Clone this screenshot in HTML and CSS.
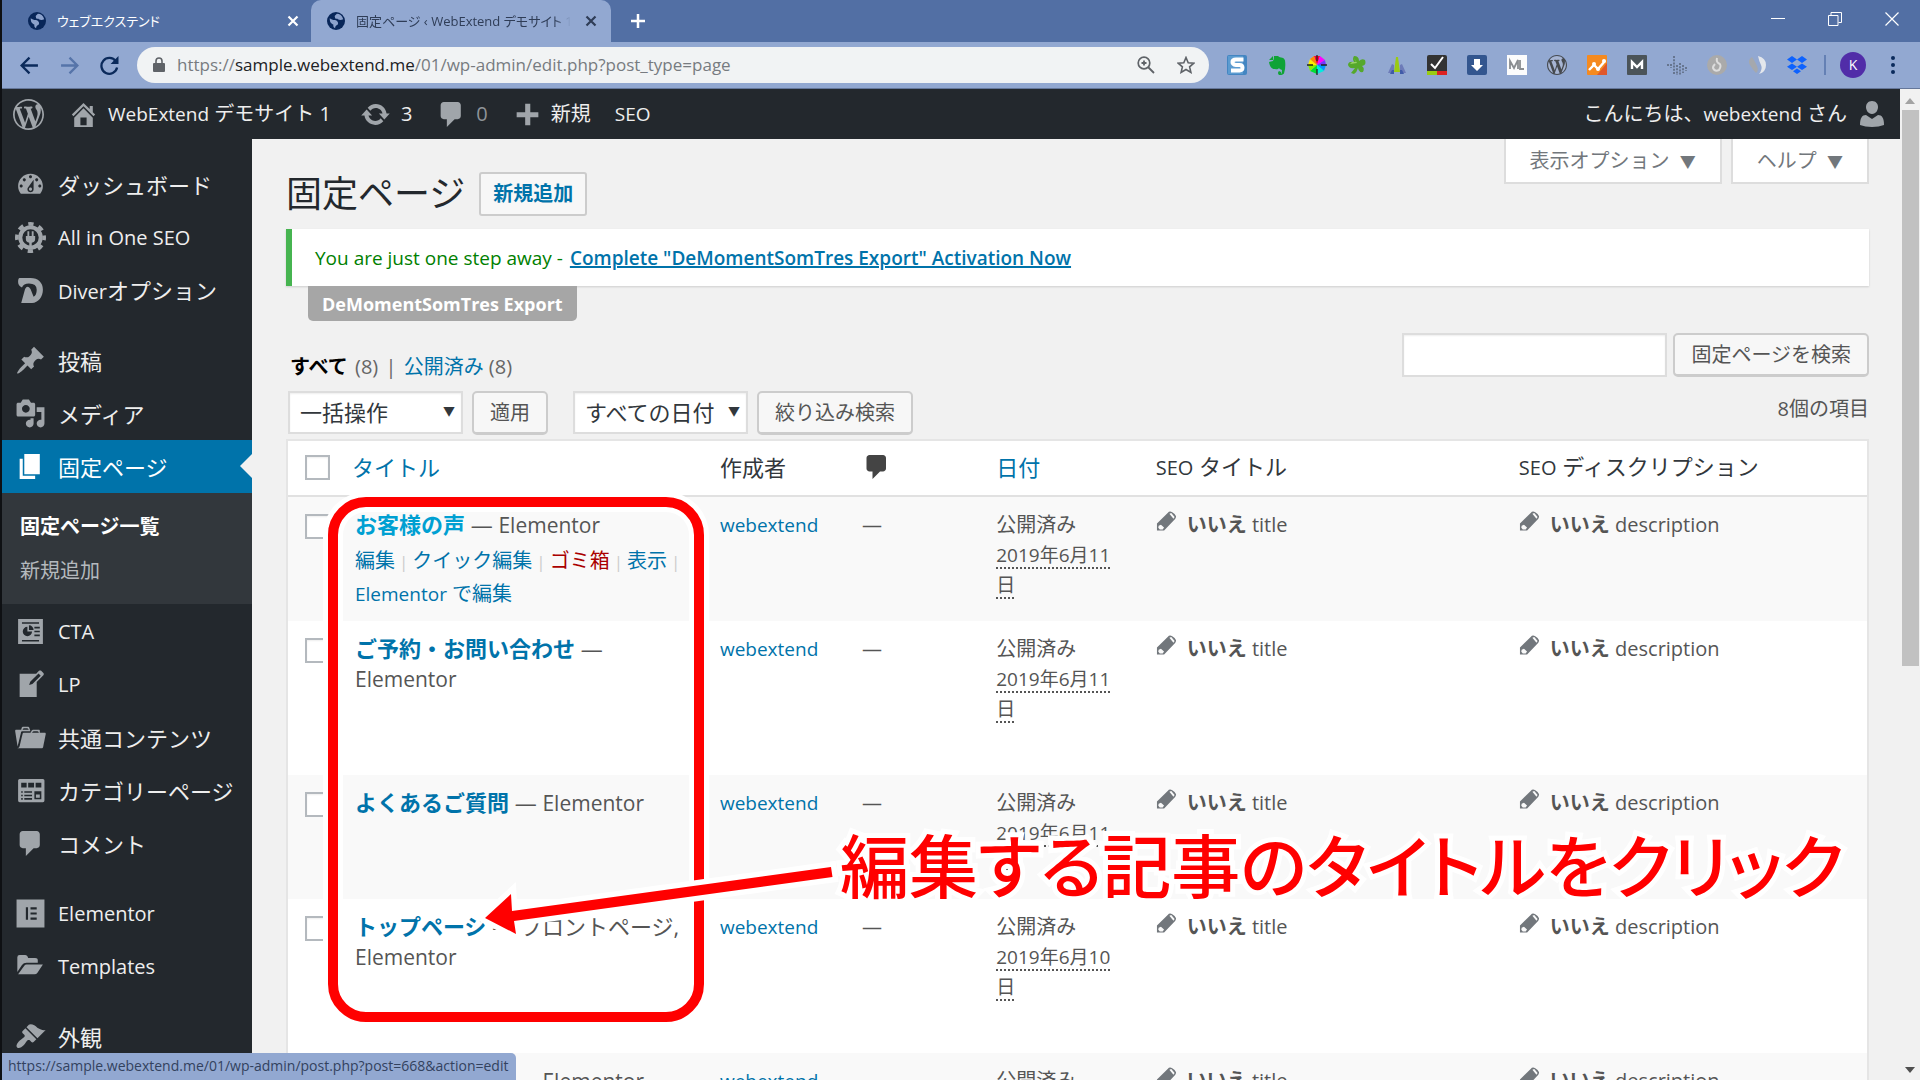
FILE: index.html
```html
<!DOCTYPE html>
<html lang="ja">
<head>
<meta charset="utf-8">
<title>固定ページ ‹ WebExtend デモサイト 1</title>
<link rel="stylesheet" href="styles.css">
</head>
<body>
<svg class="defs" aria-hidden="true">
  <symbol id="globe" viewBox="0 0 20 20"><circle cx="10" cy="10" r="10" fill="#082659"/><path fill="#8ca2cc" d="M11 2c3 0 6 2 7 6-2 1-4 1-6 0 0-1-2 0-3-1 0-2-1-2 0-3zM3 7c2 1 3 2 6 2 3 1 4 3 3 5-2 1-3 2-3 4-2-1-2-2-2-4-2-1-4-2-4-7z"/></symbol>
  <symbol id="cross" viewBox="0 0 12 12"><path d="M1.500 1.500l9 9M10.500 1.500l-9 9" stroke="currentColor" stroke-width="2.200"/></symbol>
  <symbol id="wp" viewBox="0 0 20 20"><path d="M20 10c0-5.510-4.490-10-10-10C4.480 0 0 4.490 0 10c0 5.520 4.480 10 10 10 5.510 0 10-4.480 10-10zM7.780 15.370L4.370 6.220c.55-.02 1.170-.08 1.170-.08.5-.06.44-1.130-.06-1.110 0 0-1.450.11-2.370.11-.18 0-.37 0-.58-.01C4.120 2.690 6.870 1.110 10 1.110c2.330 0 4.450.87 6.050 2.340-.68-.11-1.650.39-1.650 1.580 0 .74.45 1.360.9 2.100.35.61.55 1.360.55 2.460 0 1.490-1.400 5-1.400 5l-3.030-8.370c.54-.02.82-.17.82-.17.5-.05.44-1.250-.06-1.220 0 0-1.440.12-2.380.12-.87 0-2.330-.12-2.330-.12-.5-.03-.56 1.200-.06 1.220l.92.08 1.260 3.410zM17.410 10c.24-.64.74-1.870.43-4.250.7 1.290 1.050 2.710 1.050 4.250 0 3.290-1.730 6.240-4.400 7.780.97-2.590 1.940-5.200 2.920-7.780zM6.100 18.090C3.120 16.650 1.110 13.530 1.110 10c0-1.300.23-2.480.72-3.590C3.250 10.300 4.670 14.200 6.100 18.090zm4.030-6.630l2.580 6.980c-.86.29-1.760.45-2.710.45-.79 0-1.570-.11-2.290-.33.81-2.380 1.620-4.740 2.420-7.100z"/></symbol>
  <symbol id="bubble" viewBox="0 0 20 20"><path d="M5 2h9c1.100 0 2 .9 2 2v7c0 1.100-.9 2-2 2h-2l-5 5v-5H5c-1.100 0-2-.9-2-2V4c0-1.100.9-2 2-2z"/></symbol>
  <symbol id="pencil" viewBox="0 0 22 22"><path fill="#72777c" d="M1 13L12.500 1.800Q14-.2 17 1.200T21 5.500Q21 7 20 8.500L8.500 20.500H1z"/><path fill="#f9f9f9" d="M2.800 15.500l2.400-1.200 3.200 3-1.400 2H4L2.400 17.500zM14 3l2-1 3.500 4.200-1.200 1.800z"/></symbol>
</svg>

<div class="window">
  <header class="chrome">
    <div class="tabstrip">
      <div class="tab">
        <svg class="favicon"><use href="#globe"/></svg><span class="tab-title">ウェブエクステンド</span>
        <button class="tab-close" aria-label="タブを閉じる"><svg><use href="#cross"/></svg></button>
      </div>
      <div class="tab active">
        <svg class="favicon"><use href="#globe"/></svg><span class="tab-title fade">固定ページ ‹ WebExtend デモサイト 1</span>
        <button class="tab-close" aria-label="タブを閉じる"><svg><use href="#cross"/></svg></button>
      </div>
      <button class="tab-new" aria-label="新しいタブ"><svg viewBox="0 0 16 16"><path d="M8 1v14M1 8h14" stroke="#fff" stroke-width="2.500"/></svg></button>
      <div class="win-controls">
        <button aria-label="最小化"><svg viewBox="0 0 14 14"><path d="M0 6.500h14" stroke="#fff"/></svg></button>
        <button aria-label="元に戻す"><svg viewBox="0 0 14 14"><path d="M.5 3.500h9.500v10H.5zM3 3V.5h10.500v10H10.500" stroke="#fff" fill="none"/></svg></button>
        <button aria-label="閉じる"><svg viewBox="0 0 14 14"><path d="M.5.5l13 13M13.500.5l-13 13" stroke="#fff" stroke-width="1.200"/></svg></button>
      </div>
    </div>
    <div class="toolbar">
      <nav class="nav-buttons">
        <button aria-label="戻る"><svg viewBox="0 0 18 18"><path d="M17 9H2M9 1.500L1.500 9 9 16.500" stroke="#0b2a5b" stroke-width="2.200" fill="none"/></svg></button>
        <button aria-label="進む"><svg viewBox="0 0 18 18"><path d="M1 9h15M9 1.500L16.500 9 9 16.500" stroke="#5674a9" stroke-width="2.200" fill="none"/></svg></button>
        <button aria-label="再読み込み"><svg viewBox="0 0 18 18"><path d="M15 5A7.500 7.500 0 1 0 16.200 11" stroke="#0b2a5b" stroke-width="2.200" fill="none"/><path d="M17.500 0v7.500H10z" fill="#0b2a5b"/></svg></button>
      </nav>
      <div class="omnibox">
        <svg class="lock" viewBox="0 0 12 16"><path d="M1 6h10q1 0 1 1v7q0 1-1 1H1q-1 0-1-1V7q0-1 1-1z" fill="#5f6368"/><path d="M3 7V4a3 3 0 0 1 6 0v3" fill="none" stroke="#5f6368" stroke-width="1.600"/></svg>
        <span class="url">https://<b>sample.webextend.me</b>/01/wp-admin/edit.php?post_type=page</span>
        <button aria-label="ズーム"><svg viewBox="0 0 18 18"><circle cx="7" cy="7" r="5.800" fill="none" stroke="#5f6368" stroke-width="1.700"/><path d="M11 11l6 6M4.500 7h5M7 4.500v5" stroke="#5f6368" stroke-width="1.800"/></svg></button>
        <button aria-label="ブックマーク"><svg viewBox="0 0 18 18"><path d="M9 1.500l2.200 5.200 5.600.5-4.200 3.700 1.300 5.500L9 13.500l-4.900 2.900 1.300-5.500L1.200 7.200l5.600-.5z" fill="none" stroke="#5f6368" stroke-width="1.600"/></svg></button>
      </div>
      <div class="extensions">
        <svg viewBox="0 0 20 20"><rect width="20" height="20" rx="2" fill="#4486c2"/><rect x="1" y="1" width="15" height="18" fill="#5b9bd0"/><path d="M16.500 4.500H9Q5.500 4.500 5.500 7t3.500 3h3.500q3 0 3 2.800t-3 2.700H4" fill="none" stroke="#fff" stroke-width="4"/></svg>
        <svg viewBox="0 0 20 20"><path fill="#0fa336" d="M7 1h4q1 1 3 1.500 3 0 4 3 1 7-1 13-2 2-5 1.500-2-2 0-4l2 1v2q1-1 1-4-3-1-3-2-1 2-4 1-5 0-6-7l4-1q1-1 1-5zM6 1v4H2z"/></svg>
        <svg viewBox="0 0 20 20"><path fill="#f03" d="M10 10L7 1h6z"/><path fill="#f0f" d="M10 10l3-9 5 4z"/><path fill="#73f" d="M10 10l8-5 1 5z"/><path fill="#09f" d="M10 10h9l-2 6z"/><path fill="#0ed" d="M10 10l7 6-7 3z"/><path fill="#0d3" d="M10 10v9l-7-3z"/><path fill="#8e0" d="M10 10l-7 6-2-6z"/><path fill="#fe0" d="M10 10H1l2-6z"/><path fill="#f80" d="M10 10L3 4l4-3z"/><path stroke="#222" stroke-width="1.300" d="M10 0v6M10 14v6M0 10h6M14 10h6"/></svg>
        <svg viewBox="0 0 20 20"><path fill="#55a82c" d="M7 1q5 0 5 5 3-3 6-1 2 5-3 6 3 2 1 6-4 1-5-4-1 4-4 6l-3-1 4-5q-7 1-7-4 1-3 6-2-2-3 0-6z"/><path fill="#9ad367" d="M7 3l3 5-7 1 2-2 4 0z"/></svg>
        <svg viewBox="0 0 20 20"><path fill="#6d7bb8" d="M1 18L5 9l2 1v8zM19 18l-4-9-2 1v8z"/><path fill="#9bcb12" d="M7 17L9 2h2l2 15z"/><path fill="#405ba8" d="M5 15h2v4H3zM13 15h2l2 4h-4z"/></svg>
        <svg viewBox="0 0 20 20"><rect width="20" height="20" rx="2" fill="#333"/><path d="M0 16h10v4H0z" fill="#9c1"/><path d="M10 16h10v4H10z" fill="#d22"/><path d="M4 9l4 4 8-11" fill="none" stroke="#fff" stroke-width="2"/></svg>
        <svg viewBox="0 0 20 20"><rect width="20" height="20" rx="2" fill="#33568f"/><path d="M7 4h6v6h3l-6 6-6-6h3z" fill="#fff"/></svg>
        <svg viewBox="0 0 20 20"><rect width="20" height="20" fill="#fcfcfc"/><path d="M3 14V6l4 7 4-8v9M13 5v9h4" fill="none" stroke="#8a8d90" stroke-width="1.800"/></svg>
        <svg viewBox="0 0 20 20"><circle cx="10" cy="10" r="9" fill="#a7b5d3"/><use href="#wp" class="wp-ext"/></svg>
        <svg viewBox="0 0 20 20"><rect width="20" height="20" rx="1" fill="#f58a1f"/><path d="M10 20L20 8v12z" fill="#e0572a"/><path d="M2 15l5-5 4 4 7-8" fill="none" stroke="#fff" stroke-width="2.400"/><circle cx="7" cy="9" r="2" fill="#fff"/><circle cx="11" cy="14" r="2" fill="#fff"/><circle cx="17" cy="6" r="2" fill="#fff"/></svg>
        <svg viewBox="0 0 20 20"><rect width="20" height="20" rx="1" fill="#4b5459"/><path d="M5 14V7l5 5 5-5v7" fill="none" stroke="#fff" stroke-width="2.400"/></svg>
        <svg viewBox="0 0 20 20"><path d="M7 1v18M10 10v10M13 8v12M16 10v8M19 12v4M4 9v4M1 9v2" stroke="#66758f" stroke-width="2" stroke-dasharray="2 1.200"/></svg>
        <svg viewBox="0 0 20 20"><circle cx="10" cy="10" r="10" fill="#aaa"/><path d="M10 3q-1 4 2 5.500T12 15q-4 2-6-2 0-2 2-4" fill="none" stroke="#ddd" stroke-width="2"/></svg>
        <svg viewBox="0 0 20 20"><path fill="#a5a8ad" d="M5 2Q0 5 3 10t6 8q3-2 1-7T5 2z"/><path fill="#e4e7ec" d="M11 1q8 2 8 9t-7 9q4-5 2-9t-3-9z"/></svg>
        <svg viewBox="0 0 20 20"><path fill="#0d62fe" d="M5 1l5 3.500L5 8 0 4.500zM15 1l5 3.500L15 8l-5-3.500zM5 8.500l5 3.300L5 15l-5-3.200zM15 8.500l5 3.300-5 3.200-5-3.200zM10 13.500l4 2.700-4 2.800-4-2.800z"/></svg>
      </div>
      <span class="divider"></span>
      <button class="profile" aria-label="プロフィール">K</button>
      <button class="kebab" aria-label="メニュー"><svg viewBox="0 0 4 18"><circle cx="2" cy="2" r="2"/><circle cx="2" cy="9" r="2"/><circle cx="2" cy="16" r="2"/></svg></button>
    </div>
  </header>

  <div class="viewport">
    <div class="page">
      <nav class="adminbar">
        <a href="#" class="ab-logo" aria-label="WordPress"><svg><use href="#wp"/></svg></a>
        <a href="#" class="ab-site"><svg viewBox="0 0 20 20"><path d="M16 8.500l1.530 1.530-1.060 1.060L10 4.600l-6.470 6.490-1.060-1.060L10 2.500l4 4v-2h2v4zm-6-2.460l6 5.990V18H4v-5.970zM12 17v-5H8v5h4z"/></svg><span><span class="en">WebExtend</span> デモサイト 1</span></a>
        <a href="#" class="ab-update"><svg viewBox="0 0 20 20"><path d="M10.200 3.280c3.530 0 6.430 2.610 6.920 6h2.080l-3.500 4-3.500-4h2.320c-.45-1.970-2.210-3.450-4.320-3.450-1.450 0-2.730.71-3.540 1.780L4.950 5.660C6.230 4.200 8.110 3.280 10.200 3.280zm-.4 13.440c-3.520 0-6.430-2.610-6.920-6H.8l3.500-4c1.170 1.330 2.330 2.670 3.500 4H5.480c.45 1.970 2.210 3.450 4.320 3.450 1.450 0 2.730-.71 3.540-1.780l1.710 1.950c-1.280 1.460-3.150 2.380-5.250 2.380z"/></svg><span>3</span></a>
        <a href="#" class="ab-comments"><svg><use href="#bubble"/></svg><span>0</span></a>
        <a href="#" class="ab-new"><svg viewBox="0 0 20 20"><path d="M17 8.500v3.200h-5.200V17H8.500v-5.300H3V8.500h5.500V3h3.300v5.500z"/></svg><span>新規</span></a>
        <a href="#" class="en">SEO</a>
        <a href="#" class="ab-account"><span>こんにちは、<span class="en">webextend</span> さん</span><svg viewBox="0 0 24 26"><path d="M12 0c4 0 6 3 6 6s-2 7-6 7-6-4-6-7 2-6 6-6zM0 24c0-7 2-10 6-10l6 4 6-4c4 0 6 3 6 10q-5 2-12 2T0 24z"/></svg></a>
      </nav>
      <div class="columns">
        <nav class="menu">
          <a href="#"><svg viewBox="0 0 20 20"><path d="M3.760 16h12.480c1.100-1.370 1.760-3.110 1.760-5 0-4.420-3.580-8-8-8s-8 3.580-8 8c0 1.890.66 3.630 1.760 5zM10 4c.55 0 1 .45 1 1s-.45 1-1 1-1-.45-1-1 .45-1 1-1zM6 6c.55 0 1 .45 1 1s-.45 1-1 1-1-.45-1-1 .45-1 1-1zm8 0c.55 0 1 .45 1 1s-.45 1-1 1-1-.45-1-1 .45-1 1-1zm-5.370 5.550L12 7v6c0 1.100-.9 2-2 2s-2-.9-2-2c0-.57.24-1.080.63-1.450zM4 10c.55 0 1 .45 1 1s-.45 1-1 1-1-.45-1-1 .45-1 1-1zm12 0c.55 0 1 .45 1 1s-.45 1-1 1-1-.45-1-1 .45-1 1-1zm-5 3c0-.55-.45-1-1-1s-1 .45-1 1 .45 1 1 1 1-.45 1-1z"/></svg>ダッシュボード</a>
          <a href="#" class="en"><svg viewBox="0 0 20 20"><circle cx="10" cy="10" r="6.600" fill="none" stroke="currentColor" stroke-width="2.600"/><circle cx="10" cy="10" r="8.800" fill="none" stroke="currentColor" stroke-width="2.400" stroke-dasharray="3.456 3.456" stroke-dashoffset="1.728"/><path d="M7 9h6v2q0 2-2.200 2.400V16H9.200v-2.600Q7 13 7 11zM8 6h1.200v3H8zM10.800 6H12v3h-1.200z"/></svg>All in One SEO</a>
          <a href="#"><svg viewBox="0 0 20 20"><path d="M3 2h7c5 0 8 3 8 7.500S15 18 11 18H4L6.500 9Q8 6 10 9l2 5q2-1 2-4.500 0-4-5-4-3.500 0-4.500 2.500Q2 7 2 4.500 2 2 3 2z"/></svg><span><span class="en">Diver</span>オプション</span></a>
          <a href="#" class="sep"><svg viewBox="0 0 20 20"><path d="M10.440 3.020l1.820-1.820 6.360 6.350-1.830 1.820c-1.050-.68-2.480-.57-3.410.36l-.75.75c-.92.93-1.040 2.350-.35 3.410l-1.830 1.820-2.410-2.410-2.800 2.790c-.42.42-3.380 2.710-3.800 2.290s1.860-3.390 2.280-3.810l2.790-2.790L4.100 9.360l1.830-1.820c1.050.69 2.480.57 3.400-.36l.75-.75c.93-.92 1.050-2.350.36-3.410z"/></svg>投稿</a>
          <a href="#"><svg viewBox="0 0 20 20"><path d="M13 11V4c0-.55-.45-1-1-1h-1.670L9 1H5L3.670 3H2c-.55 0-1 .45-1 1v7c0 .55.45 1 1 1h10c.55 0 1-.45 1-1zM7 4.500c1.380 0 2.500 1.120 2.500 2.500S8.380 9.500 7 9.500 4.500 8.380 4.500 7 5.620 4.500 7 4.500zM14 6h5v10.500c0 1.380-1.120 2.500-2.500 2.500S14 17.880 14 16.500s1.120-2.500 2.500-2.500c.17 0 .34.02.5.05V9h-3V6zm-4 8.050V13h2v3.500c0 1.380-1.120 2.500-2.500 2.500S7 17.880 7 16.500 8.120 14 9.500 14c.17 0 .34.02.5.05z"/></svg>メディア</a>
          <a href="#" class="current"><svg viewBox="0 0 20 20"><path d="M6 15V2h10v13H6zm-1 1h8v2H3V5h2v11z"/></svg>固定ページ</a>
          <div class="submenu"><a href="#" class="on">固定ページ一覧</a><a href="#">新規追加</a></div>
          <a href="#" class="en"><svg viewBox="0 0 20 20"><path fill-rule="evenodd" d="M2 2h16v16H2zM4.500 4v1h11V4zM4.500 15.500v1h11v-1zM8 7a3 3 0 1 0 3 3H8zM9 6v3h3a3 3 0 0 0-3-3zM12.500 7v1H16V7zM12.500 9.500v1H16v-1zM12.500 12v1H16v-1z"/></svg>CTA</a>
          <a href="#" class="en"><svg viewBox="0 0 20 20"><path d="M16.890 1.200l1.410 1.410c.39.39.39 1.020 0 1.410L14 8.330V18H3V3h10.670l1.800-1.800c.4-.39 1.030-.4 1.420 0zm-5.660 8.480l5.370-5.360-1.420-1.420-5.360 5.370-.71 2.120z"/></svg>LP</a>
          <a href="#"><svg viewBox="0 0 20 20"><path d="M4 5H.78c-.37 0-.74.32-.69.84l1.560 9.990S3.500 8.470 3.860 6.700c.11-.53.61-.7.98-.7H10s-.7-2.080-.77-2.310C9.110 3.250 8.890 3 8.450 3H5.140c-.36 0-.7.23-.8.64C4.250 4.040 4 5 4 5zm4.880 0h-4s.42-1 .87-1h2.130c.48 0 1 1 1 1zM2.670 16.250c-.31.47-.76.75-1.260.75h15.730c.54 0 .92-.31 1.030-.83.44-2.190 1.680-8.440 1.680-8.440.07-.5-.3-.73-.62-.73H16V5.530c0-.16-.26-.53-.66-.53h-3.760c-.52 0-.87.58-.87.58L10 7H5.590c-.32 0-.63.19-.69.5 0 0-1.590 6.700-1.720 7.330-.07.37-.22.99-.51 1.420zM15.380 7H11s.58-1 1.130-1h2.290c.71 0 .96 1 .96 1z"/></svg>共通コンテンツ</a>
          <a href="#"><svg viewBox="0 0 20 20"><path fill-rule="evenodd" d="M3 2.500h15q1 0 1 1v13q0 1-1 1H3q-1 0-1-1v-13q0-1 1-1zM4 5v3h3.500V5zM8.500 5v3h3.800V5zM13.300 5v3H17V5zM4 10.500v1h1v-1zM6 10.500v1h5v-1zM4 12.700v1h1v-1zM6 12.700v1h5v-1zM4 14.900v1h1v-1zM6 14.900v1h5v-1zM12.500 10.500v5.200H17v-5.200zM13.500 12.500H16v2.200h-2.500z"/></svg>カテゴリーページ</a>
          <a href="#"><svg><use href="#bubble"/></svg>コメント</a>
          <a href="#" class="sep en"><svg viewBox="0 0 20 20"><path fill-rule="evenodd" d="M1 1h18v18H1zM7 6v8h1.400V6zM10 6v1.400h4V6zM10 9.300v1.400h4V9.300zM10 12.600V14h4v-1.400z"/></svg>Elementor</a>
          <a href="#" class="en"><svg viewBox="0 0 20 20"><path d="M1.500 13.500V4Q1.500 2.500 3 2.500h3.500q1.500 0 2 2H13q1.700 0 1.700 1.500v1.500H7.500Q5.500 7.500 4.500 9zM2 15L6 9.500Q6.500 8.700 7.500 8.700H18L14.500 14q-.7 1-2 1z"/></svg>Templates</a>
          <a href="#" class="sep"><svg viewBox="0 0 20 20"><path d="M14.480 11.060L7.410 3.990l1.500-1.500c.5-.56 2.300-.47 3.510.32 1.210.8 1.430 1.280 2.910 2.100 1.180.64 2.450 1.260 4.450.85zm-.71.71L6.700 4.700 4.930 6.470c-.39.39-.39 1.020 0 1.410l1.060 1.060c.39.39.39 1.030 0 1.420-.6.6-1.430 1.110-2.210 1.690-.35.26-.7.53-1.010.84C1.430 14.230.4 16.080 1.400 17.070c.99 1 2.840-.03 4.180-1.360.31-.31.58-.66.85-1.020.57-.78 1.080-1.610 1.690-2.210.39-.39 1.020-.39 1.410 0l1.060 1.060c.39.39 1.020.39 1.410 0z"/></svg>外観</a>
        </nav>

        <main class="content">
          <div class="head">
            <h1>固定ページ</h1>
            <a href="#" class="add-new">新規追加</a>
            <div class="screen-links">
              <button>表示オプション <i>▼</i></button>
              <button>ヘルプ <i>▼</i></button>
            </div>
          </div>
          <div class="notice">You are just one step away - <a href="#">Complete "DeMomentSomTres Export" Activation Now</a></div>
          <div class="notice-tag">DeMomentSomTres Export</div>

          <div class="views">
            <p><b>すべて</b> (8) <span class="bar">|</span> <a href="#">公開済み</a> (8)</p>
            <form class="search">
              <input type="search" aria-label="固定ページを検索">
              <button type="button" class="btn">固定ページを検索</button>
            </form>
          </div>
          <div class="tablenav">
            <span class="select"><select aria-label="一括操作"><option>一括操作</option></select></span>
            <button class="btn">適用</button>
            <span class="select dates"><select aria-label="日付で絞り込む"><option>すべての日付</option></select></span>
            <button class="btn">絞り込み検索</button>
            <span class="count">8個の項目</span>
          </div>

          <table class="list">
            <colgroup><col class="c-check"><col class="c-title"><col class="c-author"><col class="c-comments"><col class="c-date"><col class="c-seo"><col></colgroup>
            <thead>
              <tr><th><input type="checkbox" aria-label="すべて選択"></th><th><a href="#">タイトル</a></th><th>作成者</th><th><svg class="head-bubble" role="img" aria-label="コメント"><use href="#bubble"/></svg></th><th><a href="#">日付</a></th><th><span class="en">SEO</span> タイトル</th><th><span class="en">SEO</span> ディスクリプション</th></tr>
            </thead>
            <tbody>
              <tr>
                <td><input type="checkbox" aria-label="お客様の声を選択"></td>
                <td class="title"><a href="#" class="hover">お客様の声</a> — <span class="en">Elementor</span>
                  <div class="actions"><a href="#">編集</a><i>|</i><a href="#">クイック編集</a><i>|</i><a href="#" class="trash">ゴミ箱</a><i>|</i><a href="#">表示</a><i>|</i><br><a href="#"><span class="en">Elementor</span> で編集</a></div></td>
                <td><a href="#" class="en">webextend</a></td><td>—</td>
                <td>公開済み<br><abbr>2019年6月11<br>日</abbr></td>
                <td class="seo"><svg><use href="#pencil"/></svg><b>いいえ</b> <span>title</span></td>
                <td class="seo"><svg><use href="#pencil"/></svg><b>いいえ</b> <span>description</span></td>
              </tr>
              <tr class="tall">
                <td><input type="checkbox" aria-label="ご予約・お問い合わせを選択"></td>
                <td class="title"><a href="#">ご予約・お問い合わせ</a> —<br><span class="en">Elementor</span></td>
                <td><a href="#" class="en">webextend</a></td><td>—</td>
                <td>公開済み<br><abbr>2019年6月11<br>日</abbr></td>
                <td class="seo"><svg><use href="#pencil"/></svg><b>いいえ</b> <span>title</span></td>
                <td class="seo"><svg><use href="#pencil"/></svg><b>いいえ</b> <span>description</span></td>
              </tr>
              <tr>
                <td><input type="checkbox" aria-label="よくあるご質問を選択"></td>
                <td class="title"><a href="#">よくあるご質問</a> — <span class="en">Elementor</span></td>
                <td><a href="#" class="en">webextend</a></td><td>—</td>
                <td>公開済み<br><abbr>2019年6月11<br>日</abbr></td>
                <td class="seo"><svg><use href="#pencil"/></svg><b>いいえ</b> <span>title</span></td>
                <td class="seo"><svg><use href="#pencil"/></svg><b>いいえ</b> <span>description</span></td>
              </tr>
              <tr class="tall">
                <td><input type="checkbox" aria-label="トップページを選択"></td>
                <td class="title"><a href="#">トップページ</a> — フロントページ,<br><span class="en">Elementor</span></td>
                <td><a href="#" class="en">webextend</a></td><td>—</td>
                <td>公開済み<br><abbr>2019年6月10<br>日</abbr></td>
                <td class="seo"><svg><use href="#pencil"/></svg><b>いいえ</b> <span>title</span></td>
                <td class="seo"><svg><use href="#pencil"/></svg><b>いいえ</b> <span>description</span></td>
              </tr>
              <tr>
                <td></td>
                <td class="title"><span class="blank"></span> — <span class="en">Elementor</span></td>
                <td><a href="#" class="en">webextend</a></td><td>—</td>
                <td>公開済み</td>
                <td class="seo"><svg><use href="#pencil"/></svg><b>いいえ</b> <span>title</span></td>
                <td class="seo"><svg><use href="#pencil"/></svg><b>いいえ</b> <span>description</span></td>
              </tr>
            </tbody>
          </table>
        </main>
      </div>
    </div>
    <div class="scrollbar"><svg viewBox="0 0 10 6"><path d="M0 6l5-6 5 6z" fill="#a3a3a3"/></svg><div class="thumb"></div><svg viewBox="0 0 10 6"><path d="M0 0l5 6 5-6z" fill="#505050"/></svg></div>
  </div>
</div>

<div class="status">https://sample.webextend.me/01/wp-admin/post.php?post=668&amp;action=edit</div>
<div class="mark-box"></div>
<svg class="mark-arrow" viewBox="0 0 370 60"><path d="M5 43L31 19 32 36 351 -8 352.500 2 34 46 36 59z"/></svg>
<div class="mark-text">編集する記事のタイトルをクリック</div>
</body>
</html>
```
FILE: styles.css
```css
* { box-sizing: border-box; }
body {
  margin: 0;
  height: 100vh;
  overflow: hidden;
  position: relative;
  background: #0e1013;
  color: #555;
  font: 20px/30px "Open Sans", "Noto Sans CJK JP", sans-serif;
}
a { color: #0073aa; text-decoration: none; }
button { border: 0; padding: 0; background: none; font: inherit; color: inherit; }
svg { display: block; flex: none; fill: currentColor; }
i { font-style: normal; }
.defs { position: absolute; width: 0; height: 0; }
.en { font-size: 19px; }

.window { height: 100%; margin-left: 2px; display: flex; flex-direction: column; }

/* Browser frame */
.tabstrip { height: 42px; display: flex; background: #526fa4; }
.tab {
  width: 309px;
  display: flex;
  align-items: center;
  padding: 0 12px 0 26px;
  color: #fff;
  font-size: 13px;
  font-feature-settings: "palt";
}
.tab.active { width: 300px; padding: 0 14px 0 16px; background: #92a8d1; color: #2f3d57; border-radius: 10px 10px 0 0; }
.favicon { width: 18px; height: 18px; margin-right: 11px; }
.tab-title { flex: 1; white-space: nowrap; overflow: hidden; }
.fade { margin-right: 14px; -webkit-mask-image: linear-gradient(90deg, #000 92%, transparent); mask-image: linear-gradient(90deg, #000 92%, transparent); }
.tab-close svg { width: 12px; height: 12px; }
.tab-new { margin-left: 19px; }
.tab-new svg { width: 16px; height: 16px; }
.win-controls { margin-left: auto; display: flex; align-items: flex-start; gap: 43px; padding: 12px 21px 0 0; }
.win-controls svg { width: 14px; height: 14px; }

.toolbar { height: 47px; display: flex; align-items: center; background: #92a8d1; border-bottom: 1px solid #65779a; padding-right: 25px; }
.nav-buttons { display: flex; gap: 21px; padding: 0 18px 0 18px; }
.nav-buttons svg { width: 19px; height: 19px; }
.omnibox {
  flex: 1;
  height: 36px;
  display: flex;
  align-items: center;
  padding: 0 14px 0 16px;
  gap: 22px;
  background: #f1f3f4;
  border-radius: 18px;
  color: #777b80;
  font-size: 17px;
}
.omnibox b { font-weight: 400; color: #202124; }
.omnibox svg { width: 18px; height: 18px; }
.omnibox .lock { width: 12px; height: 16px; }
.url { flex: 1; margin-left: -10px; }
.extensions { display: flex; gap: 20px; margin-left: 18px; }
.extensions svg { width: 20px; height: 20px; }
.wp-ext { fill: #464a4f; }
.divider { width: 2px; height: 20px; margin: 0 14px 0 17px; background: #6480b4; }
.profile { width: 26px; height: 26px; border-radius: 50%; background: #512da8; color: #fff; font-size: 14px; line-height: 26px; }
.kebab { margin-left: 25px; color: #0b2a5b; }
.kebab svg { width: 4px; height: 18px; }

.viewport { flex: 1; min-height: 0; display: flex; overflow: hidden; background: #f1f1f1; }
.page { flex: 1; min-width: 0; display: flex; flex-direction: column; }
.scrollbar { width: 20px; display: flex; flex-direction: column; align-items: center; padding: 9px 0 7px; background: #f1f1f1; }
.scrollbar svg { width: 10px; height: 6px; }
.thumb { width: 17px; height: 57%; margin: 6px 0 auto; background: #c1c1c1; }

/* Admin bar */
.adminbar { height: 50px; flex: none; display: flex; align-items: center; padding: 0 16px 0 11px; background: #23282d; color: #eee; }
.adminbar a { display: flex; align-items: center; color: #eee; }
.adminbar svg { width: 31px; height: 31px; color: #a0a5aa; }
.ab-site { margin-left: 24px; gap: 9px; }
.ab-update { margin-left: 29px; gap: 10px; }
.ab-comments { margin-left: 24px; gap: 9px; }
.adminbar .ab-comments { color: #8f9499; }
.ab-new { margin: 0 24px; gap: 8px; }
.adminbar .ab-account { margin-left: auto; gap: 13px; }
.adminbar .ab-account svg { width: 24px; height: 26px; }

/* Side menu */
.columns { flex: 1; min-height: 0; display: flex; overflow: hidden; }
.menu { width: 250px; flex: none; padding-top: 19px; background: #23282d; font-size: 22px; }
.menu > a { height: 53px; display: flex; align-items: center; gap: 12px; padding-left: 13px; color: #eee; position: relative; white-space: nowrap; }
.menu .en { font-size: 20px; }
.menu svg { width: 31px; height: 31px; color: #a0a5aa; }
.menu .sep { margin-top: 17px; }
.menu .current { background: #0073aa; color: #fff; }
.menu .current svg { color: #fff; }
.current::after { content: ""; position: absolute; right: 0; top: 14px; border: 12px solid transparent; border-left: 0; border-right-color: #f1f1f1; }
.submenu { height: 111px; margin-bottom: 1px; padding: 12px 18px 0; background: #32373c; font-size: 20px; }
.submenu a { display: block; line-height: 44px; color: #b4b9be; }
.submenu .on { color: #fff; font-weight: 700; }

/* Content */
.content { flex: 1; min-width: 0; padding: 0 31px 0 34px; }
.head { height: 90px; display: flex; align-items: center; gap: 14px; padding-top: 20px; }
h1 { margin: 0; font-size: 36px; line-height: 44px; font-weight: 400; color: #23282d; }
.add-new { padding: 5px 12px; border: 2px solid #ccc; border-radius: 3px; background: #f7f7f7; font-weight: 700; }
.screen-links { align-self: flex-start; display: flex; gap: 9px; margin: -20px 0 0 auto; }
.screen-links button { height: 45px; padding: 2px 24px 0; background: #fff; border: solid #ddd; border-width: 0 2px 2px; color: #72777c; white-space: nowrap; }
.screen-links i { font-size: 16px; margin-left: 5px; }
.notice { padding: 14px 22px 13px 23px; border-left: 6px solid #46b450; background: #fff; box-shadow: 0 1px 2px rgba(0,0,0,.15); color: #008000; font-size: 19px; }
.notice a { margin-left: 2px; font-weight: 600; text-decoration: underline; text-decoration-thickness: 2px; }
.notice-tag { width: fit-content; margin-left: 22px; padding: 3px 14px 2px; border-radius: 0 0 5px 5px; background: #a6a6a6; color: #fff; font-weight: 700; font-size: 18px; }

.views { display: flex; justify-content: space-between; margin-top: 12px; }
.views p { margin: 19px 0 0 4px; color: #666; }
.views b { color: #000; margin-right: 2px; }
.views .bar { margin: 0 2px; }
.search { display: flex; gap: 6px; }
input, select { font: inherit; color: #32373c; background: #fff; border: 2px solid #ddd; border-radius: 0; margin: 0; box-shadow: inset 0 1px 2px rgba(0,0,0,.07); }
input[type="search"] { width: 265px; height: 44px; }
.btn { height: 44px; padding: 0 16px; border: 2px solid #ccc; border-bottom-width: 3px; border-radius: 5px; background: #f7f7f7; color: #555; white-space: nowrap; }
.tablenav { display: flex; align-items: flex-start; height: 48px; margin: 9px 0 0 2px; gap: 9px; }
.select { position: relative; }
.select::after { content: "▼"; position: absolute; right: 8px; top: 6px; font-size: 12px; color: #32373c; }
.dates { margin-left: 16px; }
select { display: block; width: 175px; height: 43px; padding: 0 10px 2px; appearance: none; font-size: 22px; }
.count { margin-left: auto; line-height: 36px; }

/* Page list */
.list { width: 100%; table-layout: fixed; border-collapse: separate; border-spacing: 0; border: 2px solid #e5e5e5; background: #fff; }
.c-check { width: 52px; }
.c-title { width: 23.3%; }
.c-author { width: 9%; }
.c-comments { width: 8.5%; }
.c-date { width: 10.1%; }
.c-seo { width: 23%; }
th { height: 56px; padding: 0 12px 2px; border-bottom: 2px solid #e1e1e1; text-align: left; font-size: 22px; font-weight: 400; color: #32373c; white-space: nowrap; }
th .en { font-size: 20px; }
th:first-child, td:first-child { padding-left: 17px; }
td { height: 124px; padding: 13px 12px 0; vertical-align: top; white-space: nowrap; }
.tall td { height: 154px; }
tbody tr:nth-child(odd) { background: #f9f9f9; }
.head-bubble { width: 30px; height: 30px; color: #444; }
input[type="checkbox"] { appearance: none; display: block; width: 25px; height: 25px; border-color: #b4b9be; }
td input[type="checkbox"] { margin-top: 4px; }
td.title { padding: 12px 0 0 15px; font-size: 22px; }
.title > a { font-weight: 700; }
.title .en { font-size: 21px; }
.title .hover { color: #00a0d2; }
.blank { display: inline-block; width: 7em; }
.actions { padding-top: 5px; font-size: 20px; line-height: 32px; }
.actions .en { font-size: 19px; }
.actions i { margin: 0 4px; font-size: 17px; color: #ccc; }
.actions .trash { color: #a00; }
abbr { font-size: 19px; text-decoration: underline dotted 2px; text-underline-offset: 5px; }
.seo svg { display: inline-block; width: 21px; height: 21px; margin-right: 10px; }

/* Overlays */
.status { position: absolute; left: 2px; bottom: 0; height: 27px; padding: 0 8px 0 6px; border-radius: 0 5px 0 0; background: #92a8d1; color: #33425e; font-size: 14px; line-height: 26px; white-space: nowrap; }
.mark-box { position: absolute; left: 328px; top: 497px; width: 376px; height: 525px; border: 10px solid #f00; border-radius: 38px; box-shadow: 0 0 0 5px #fff, inset 0 0 0 5px #fff; }
.mark-arrow { position: absolute; left: 480px; top: 875px; width: 370px; height: 60px; overflow: visible; }
.mark-arrow path { fill: #f00; stroke: #fff; stroke-width: 11px; paint-order: stroke; }
.mark-text { position: absolute; left: 840px; top: 818px; color: #f00; font-size: 69px; line-height: 96px; font-weight: 500; font-feature-settings: "palt"; white-space: nowrap; -webkit-text-stroke: 10px #fff; paint-order: stroke; }
```
